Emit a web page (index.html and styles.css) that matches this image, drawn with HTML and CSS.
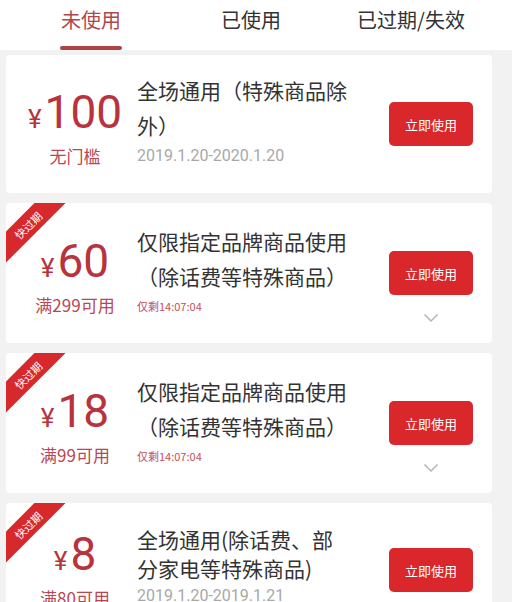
FILE: index.html
```html
<!DOCTYPE html>
<html>
<head>
<meta charset="UTF-8">
<title>优惠券</title>

<link rel="stylesheet" href="styles.css">

</head>
<body>
	<!-- tabs -->
	<div class="tabs">
		<div class="tab active">未使用</div>
		<div class="tab">已使用</div>
		<div class="tab">已过期/失效</div>
	</div>

	<div class="list">

		<div class="coupon">
			<div class="amount">
				<div class="price"><span class="yen">¥</span>100</div>
				<div class="cond">无门槛</div>
			</div>
			<div class="info">
				<p class="title">全场通用（特殊商品除<br>外）</p>
				<p class="date">2019.1.20-2020.1.20</p>
			</div>
			<div class="action">
				<button class="use">立即使用</button>
			</div>
		</div>

		<div class="coupon tall">
			<div class="ribbon">快过期</div>
			<div class="amount">
				<div class="price"><span class="yen">¥</span>60</div>
				<div class="cond">满299可用</div>
			</div>
			<div class="info">
				<p class="title">仅限指定品牌商品使用<br>（除话费等特殊商品）</p>
				<p class="timer">仅剩14:07:04</p>
			</div>
			<div class="action">
				<button class="use">立即使用</button>
				<span class="more"><svg width="16" height="10" viewBox="0 0 16 10"><polyline points="1.5,1.5 8,8 14.5,1.5" fill="none" stroke="#b4b4b4" stroke-width="1.5"/></svg></span>
			</div>
		</div>

		<div class="coupon tall">
			<div class="ribbon">快过期</div>
			<div class="amount">
				<div class="price"><span class="yen">¥</span>18</div>
				<div class="cond">满99可用</div>
			</div>
			<div class="info">
				<p class="title">仅限指定品牌商品使用<br>（除话费等特殊商品）</p>
				<p class="timer">仅剩14:07:04</p>
			</div>
			<div class="action">
				<button class="use">立即使用</button>
				<span class="more"><svg width="16" height="10" viewBox="0 0 16 10"><polyline points="1.5,1.5 8,8 14.5,1.5" fill="none" stroke="#b4b4b4" stroke-width="1.5"/></svg></span>
			</div>
		</div>

		<div class="coupon tall tight">
			<div class="ribbon">快过期</div>
			<div class="amount">
				<div class="price"><span class="yen">¥</span>8</div>
				<div class="cond">满80可用</div>
			</div>
			<div class="info">
				<p class="title">全场通用(除话费、部<br>分家电等特殊商品)</p>
				<p class="date">2019.1.20-2019.1.21</p>
			</div>
			<div class="action">
				<button class="use">立即使用</button>
			</div>
		</div>

	</div>
</body>
</html>
```

FILE: styles.css
```css
body {
	margin: 0;
	background-color: #f2f2f2;
	font-family: "Noto Sans CJK SC", "Noto Sans", sans-serif;
	color: #333;
	overflow: hidden;
}

/* top tabs */
.tabs {
	display: flex;
	height: 50px;
	padding-left: 11px;
	background-color: #ffffff;
}

.tab {
	width: 160px;
	display: flex;
	flex-direction: column;
	align-items: center;
	font-size: 20px;
	line-height: 40px;
	color: #333;
}

.tab.active {
	color: #b0484a;
}

/* the little bar under the active tab */
.tab.active::after {
	content: "";
	display: block;
	width: 62px;
	height: 4px;
	margin-top: 6px;
	border-radius: 2px;
	background-color: #a84547;
}

.list {
	padding: 5px 20px 0 6px;
}

/* one coupon card */
.coupon {
	position: relative;
	display: flex;
	height: 138px;
	margin-bottom: 10px;
	background-color: #ffffff;
	border-radius: 4px;
	overflow: hidden; /* cuts the ribbon at the corner */
}

.coupon.tall {
	height: 140px;
}

.ribbon {
	position: absolute;
	left: -28px;
	top: 11px;
	width: 100px;
	height: 22px;
	line-height: 22px;
	text-align: center;
	font-size: 11px;
	color: #fff;
	background-color: #d7282c;
	transform: rotate(-45deg);
}

.amount {
	width: 112px;
	margin-left: 13px;
	display: flex;
	flex-direction: column;
	justify-content: center;
	align-items: center;
	padding-top: 6px;
}

.price {
	font-family: Roboto, "Liberation Sans", sans-serif;
	font-size: 46px;
	line-height: 50px;
	color: #b8333b;
}

.yen {
	font-size: 26px;
	margin-right: 3px;
}

.cond {
	font-size: 17px;
	line-height: 24px;
	color: #bb4650;
}

.info {
	flex: 1;
	margin-left: 6px;
	display: flex;
	flex-direction: column;
	justify-content: center;
	padding-bottom: 7px;
}

.info p {
	margin: 0;
}

.title {
	font-size: 21px;
	line-height: 35px;
	color: #333;
}

/* last card: lines sit closer and everything rides higher */
.tight .title {
	line-height: 29px;
}

.tight .info {
	padding-bottom: 12px;
}

.tight .amount {
	padding-top: 0;
	padding-bottom: 8px;
}

.tight .action {
	padding-bottom: 6px;
}

.date {
	font-family: Roboto, "Liberation Sans", sans-serif;
	font-size: 16px;
	line-height: 26px;
	color: #a8a8a8;
}

.timer {
	font-size: 11px;
	line-height: 18px;
	margin-top: 3px !important;
	color: #c25058;
}

/* button column, chevron sits under the button */
.action {
	width: 84px;
	margin-right: 19px;
	display: grid;
	grid-template-rows: 1fr auto 1fr;
}

.use {
	grid-row: 2;
	width: 84px;
	height: 44px;
	border: none;
	border-radius: 5px;
	background-color: #d9272b;
	color: #fff;
	font-family: "Noto Sans CJK SC", sans-serif;
	font-size: 13px;
	padding: 0;
}

.more {
	grid-row: 3;
	justify-self: center;
	align-self: start;
	margin-top: 18px;
	line-height: 0;
}
```
